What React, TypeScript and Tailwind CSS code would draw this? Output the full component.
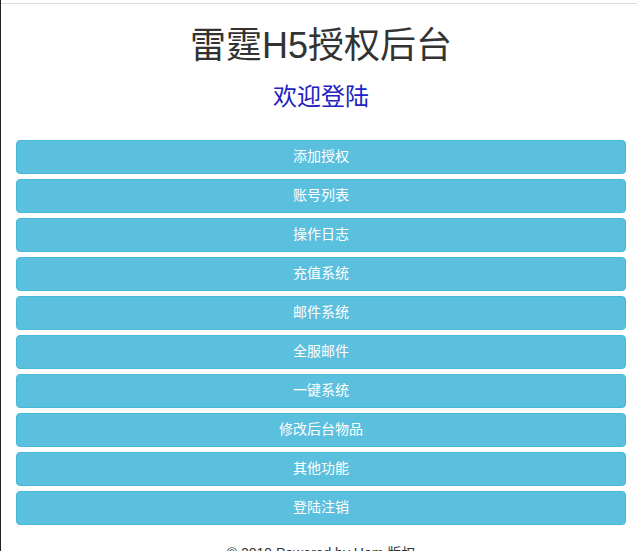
import React from 'react';

const menuItems = [
  '添加授权',
  '账号列表',
  '操作日志',
  '充值系统',
  '邮件系统',
  '全服邮件',
  '一键系统',
  '修改后台物品',
  '其他功能',
  '登陆注销',
];

export default function App() {
  return (
    <div
      className="min-h-[551px] border-l border-[#222] bg-white pt-[3px] text-[#333]"
      style={{ fontFamily: '"Liberation Sans", "Noto Sans CJK SC", sans-serif' }}
    >
      <div className="border-t border-[#dcdcdc] pl-[15px] pr-[11px]">
        <h1 className="mt-[22px] text-center text-[36px] leading-[1.1]">雷霆H5授权后台</h1>
        <h3 className="mt-[18px] text-center text-[24px] leading-[1.1] text-[#2222c4]">欢迎登陆</h3>

        <div className="mt-[30px] flex flex-col gap-[5px]">
          {menuItems.map(item => (
            <button
              key={item}
              className="h-[34px] w-full rounded-[4px] border border-[#46b8da] bg-[#5bc0de] text-[14px] text-white"
            >
              {item}
            </button>
          ))}
        </div>

        <p className="mt-[18px] text-center text-[14px] leading-[20px]">© 2019 Powered by Hom 版权</p>
      </div>
    </div>
  );
}
